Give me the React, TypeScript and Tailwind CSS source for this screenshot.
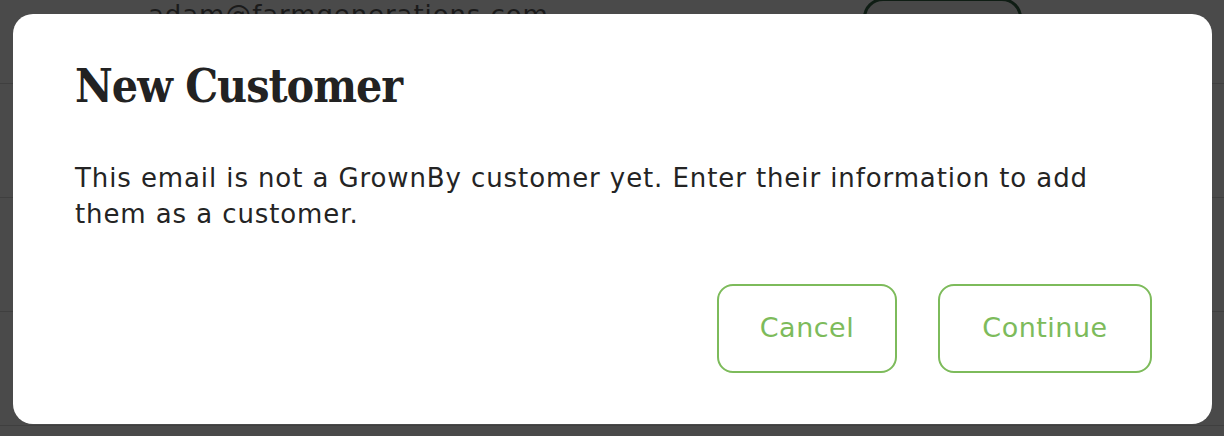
import React from "react";

export default function App() {
  return (
    <div className="relative h-[436px] w-[1224px] overflow-hidden bg-[#4a4a4a] font-['DejaVu_Sans',sans-serif]">
      {/* dimmed page behind the dialog */}
      <div className="flex flex-col">
        <div className="flex h-[84px] border-b border-[#3f3f3f]">
          <span className="ml-[148px] -mt-[3px] text-[26px] leading-[36px] tracking-[0.9px] text-[#1b1b1b]">
            adam@farmgenerations.com
          </span>
          <div className="ml-auto mr-[202px] -mt-[2px] h-[60px] w-[159px] rounded-[20px] border-[3px] border-[#0f1d14] bg-[#474747]" />
        </div>
        <div className="h-[114px] border-b border-[#3f3f3f]" />
        <div className="h-[114px] border-b border-[#3f3f3f]" />
        <div className="h-[114px] border-b border-[#3f3f3f]" />
      </div>

      {/* dialog */}
      <div className="absolute inset-0 pl-[13px] pt-[14px]">
        <div className="flex w-[1199px] flex-col rounded-[20px] bg-white pl-[62px] pr-[60px] pt-[47px] pb-[51px]">
          <h2 className="font-['DejaVu_Serif_Condensed','DejaVu_Serif',serif] text-[46px] font-bold leading-[51px] tracking-[-1px] text-[#222222] [font-stretch:condensed]">
            New Customer
          </h2>
          <p className="mt-[48px] text-[26px] leading-[36px] tracking-[0.9px] text-[#242424]">
            This email is not a GrownBy customer yet. Enter their information to add them as a customer.
          </p>
          <div className="mt-[52px] flex justify-end gap-[41px]">
            <button className="flex h-[89px] w-[180px] items-center justify-center rounded-[16px] border-2 border-[#7dbb5b] text-[27px] tracking-[0.5px] text-[#7dbb5b]">
              Cancel
            </button>
            <button className="flex h-[89px] w-[214px] items-center justify-center rounded-[16px] border-2 border-[#7dbb5b] text-[27px] tracking-[0.5px] text-[#7dbb5b]">
              Continue
            </button>
          </div>
        </div>
      </div>
    </div>
  );
}
